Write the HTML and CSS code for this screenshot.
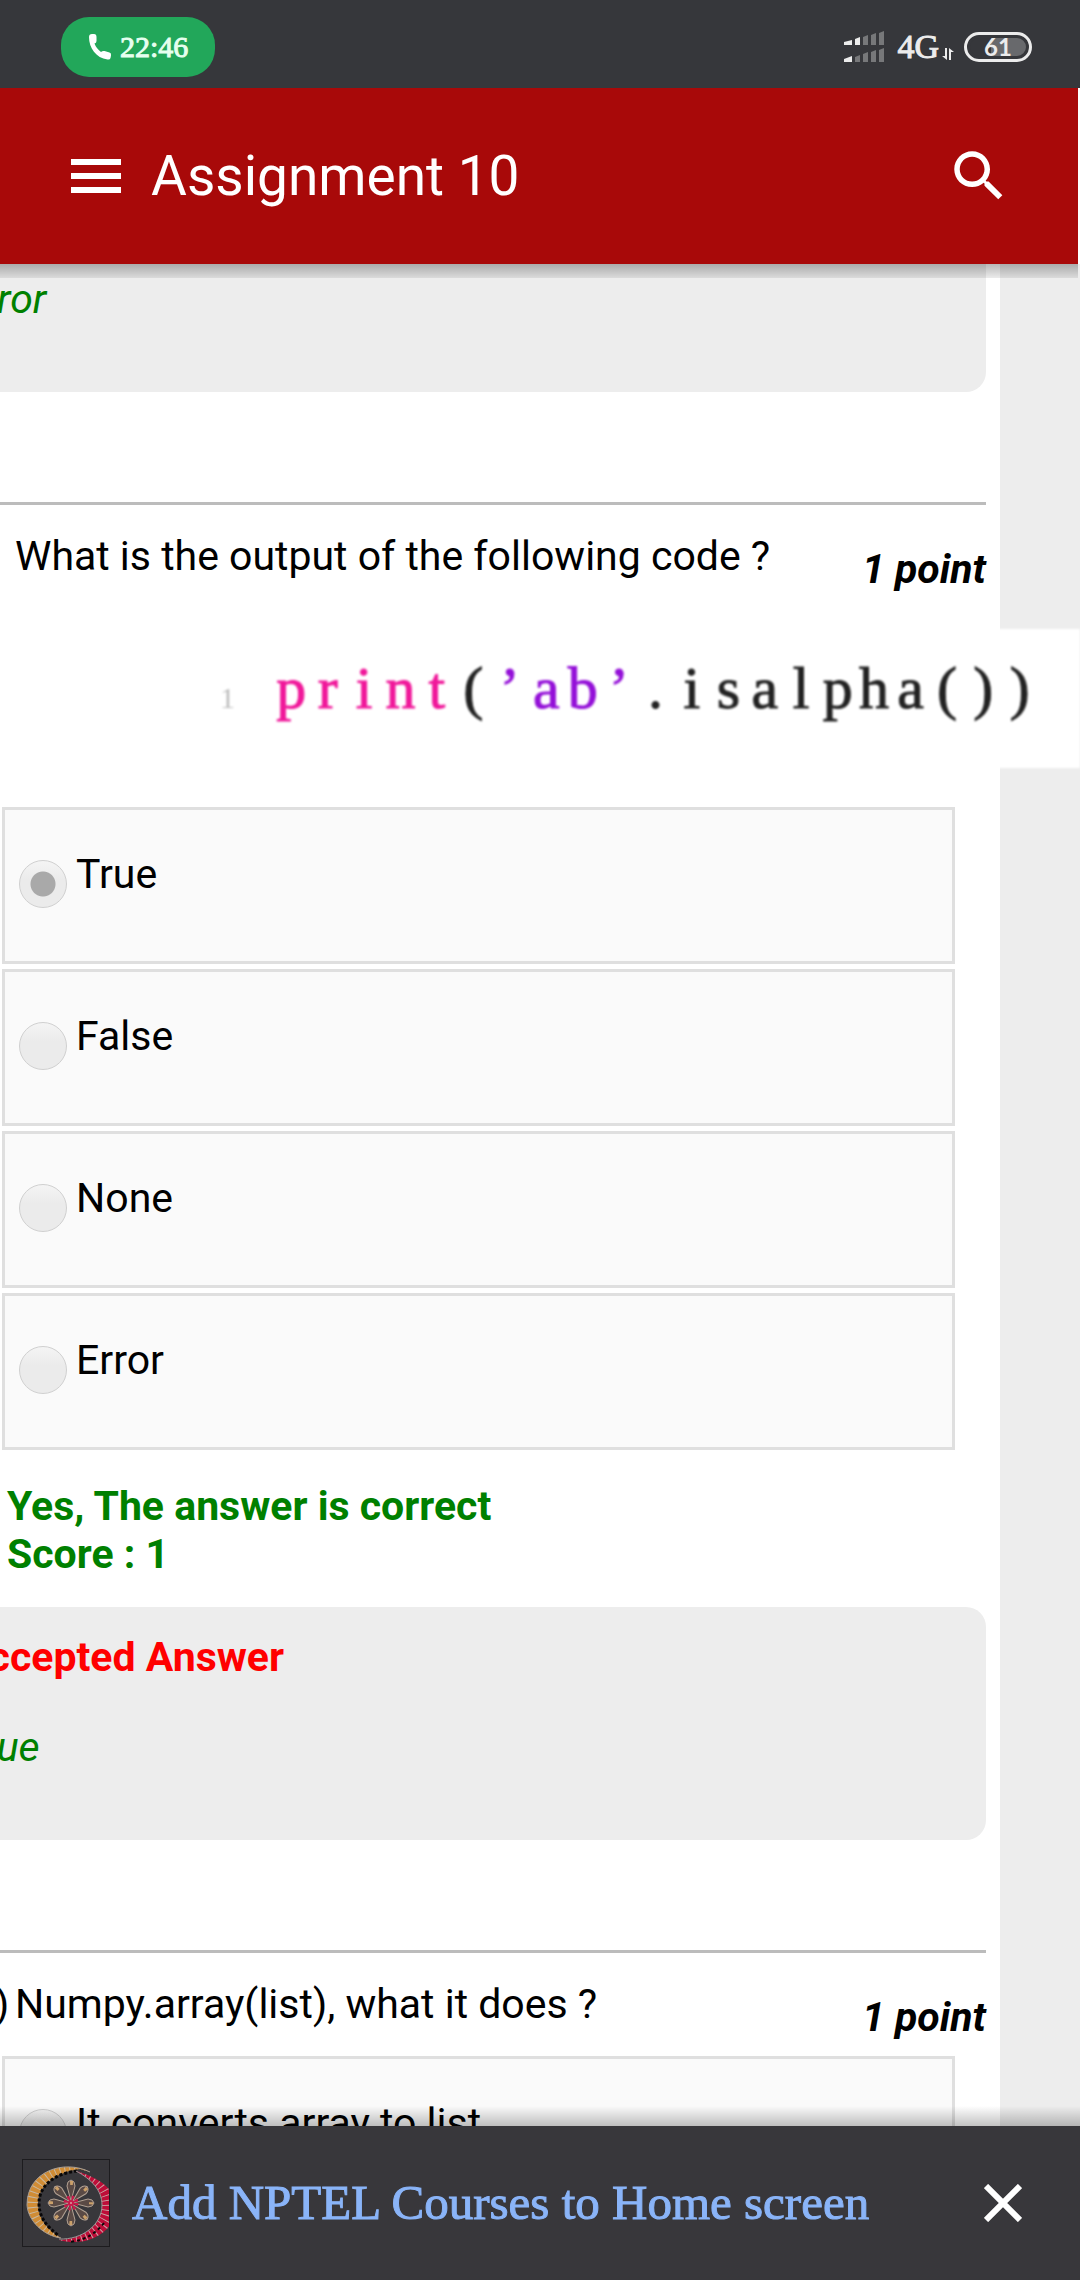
FILE: index.html
```
<!DOCTYPE html>
<html lang="en">
<head>
<meta charset="utf-8">
<meta name="viewport" content="width=device-width, initial-scale=1">
<title>Assignment 10</title>
<link rel="stylesheet" href="styles.css">
</head>
<body>
<div class="screen">
  <div class="status">
    <div class="call">
      <svg class="call-icon" viewBox="0 0 24 28" aria-hidden="true"><path d="M1 4Q1 1 4 1H6Q8.500 1 8.500 4V8Q8.500 10 6.500 10.500Q8 15 13 19Q14.500 17.500 16.500 18L21.500 19.500Q23.500 20 23 22.500L22.500 25Q22 27 19.500 26.500C8 25 1 15 1 4Z"/></svg>
      <span>22:46</span>
    </div>
    <div class="network">
      <svg class="signal" viewBox="0 0 40 32" aria-hidden="true">
        <g class="dim"><path d="M19 6L24 4V14H19ZM27 4L32 2V14H27ZM35 2L40 0V14H35ZM11 26L16 24V31H11ZM19 23L24 21V31H19ZM27 21L32 19V31H27ZM35 19L40 17V31H35Z"/></g>
        <path class="lit" d="M0 11L8 9V14H0ZM11 8L16 6V14H11ZM0 28L8 25V31H0Z"/>
      </svg>
      <span class="carrier">4G</span>
      <svg class="traffic" viewBox="0 0 14 13" aria-hidden="true"><path d="M4 0H6V12L1 8H4ZM8 12V0L13 4H10V12Z"/></svg>
      <span class="battery">61</span>
    </div>
  </div>

  <header class="appbar">
    <button class="icon-button" type="button" aria-label="Menu"><svg class="menu-icon" viewBox="0 0 50 34"><path d="M0 0H50V6H0ZM0 14H50V20H0ZM0 28H50V34H0Z"/></svg></button>
    <h1 class="title">Assignment 10</h1>
    <button class="icon-button" type="button" aria-label="Search"><svg class="search-icon" viewBox="0 0 24 24"><path d="M15.500 14h-.79l-.28-.27C15.410 12.590 16 11.110 16 9.500 16 5.910 13.090 3 9.500 3S3 5.910 3 9.500 5.910 16 9.500 16c1.610 0 3.090-.59 4.230-1.570l.27.28v.79l5 4.990L20.490 19l-4.990-5zm-6 0C7.010 14 5 11.990 5 9.500S7.010 5 9.500 5 14 7.010 14 9.500 11.990 14 9.500 14z"/></svg></button>
  </header>

  <main class="content">
    <div class="sheet">
      <section class="accepted accepted-cut">
        <p class="answer">Error</p>
      </section>

      <section class="question">
        <div class="question-head">
          <span class="number">9)</span>
          <h2 class="prompt">What is the output of the following code ?</h2>
          <em class="points">1 point</em>
        </div>
        <figure class="listing">
          <span class="line-number">1</span>
          <code class="code"><span class="keyword"><b>p</b><b>r</b><b>i</b><b>n</b><b>t</b></span><b>(</b><span class="string"><b>’</b><b>a</b><b>b</b><b>’</b></span><b>.</b><b>i</b><b>s</b><b>a</b><b>l</b><b>p</b><b>h</b><b>a</b><b>(</b><b>)</b><b>)</b></code>
        </figure>
        <div class="options">
          <label class="option"><input type="radio" name="q9" checked disabled><span>True</span></label>
          <label class="option"><input type="radio" name="q9" disabled><span>False</span></label>
          <label class="option"><input type="radio" name="q9" disabled><span>None</span></label>
          <label class="option"><input type="radio" name="q9" disabled><span>Error</span></label>
        </div>
        <p class="feedback">Yes, The answer is correct<br>Score : 1</p>
        <div class="accepted">
          <h3 class="accepted-title">Accepted Answer</h3>
          <p class="answer">True</p>
        </div>
      </section>

      <section class="question">
        <div class="question-head">
          <span class="number">10)</span>
          <h2 class="prompt">Numpy.array(list), what it does ?</h2>
          <em class="points">1 point</em>
        </div>
        <div class="options">
          <label class="option"><input type="radio" name="q10" disabled><span>It converts array to list</span></label>
        </div>
      </section>
    </div>
  </main>

  <footer class="install">
    <svg class="logo" viewBox="0 0 88 88" aria-hidden="true">
      <defs>
        <clipPath id="gold"><path d="M68 13C42 0 5 12 5 46C6 62 22 77 39 79C23 69 16 58 16 44C17 25 35 13 58 10Z"/></clipPath>
        <clipPath id="red"><path d="M54 12C68 16 94 26 94 48C94 72 66 89 37 81C60 81 80 66 80 46C80 31 69 20 54 12Z"/></clipPath>
      </defs>
      <g clip-path="url(#gold)">
        <rect width="88" height="88" fill="#d08c35"/>
        <path d="M68 10C40 3 11 18 11 45C11 62 24 74 39 79" fill="none" stroke="#c9b8a0" stroke-width="18" stroke-dasharray="1 4"/>
      </g>
      <path d="M55 12C34 14 17 26 17 44C17 58 24 67 37 77" fill="none" stroke="#080708" stroke-width="3" stroke-dasharray="3 2"/>
      <path d="M68 13C42 0 5 12 5 46C6 62 22 77 39 79" fill="none" stroke="#a89c90" stroke-width="1"/>
      <g clip-path="url(#red)">
        <rect width="88" height="88" fill="#bd0d38"/>
        <path d="M54 12C74 18 86 30 86 47C86 68 64 83 37 82" fill="none" stroke="#c9a5a5" stroke-width="18" stroke-dasharray="1 4"/>
      </g>
      <path d="M82 64C74 74 64 81 48 83" fill="none" stroke="#080708" stroke-width="2" stroke-dasharray="3 3"/>
      <path d="M54 12C69 20 80 31 80 46C80 66 60 81 37 80" fill="none" stroke="#9d9496" stroke-width="1"/>
      <g fill="#5a4a45" stroke="#b3a294" stroke-width="1">
        <path id="petal" d="M49 42L45 27Q45 22 49 21Q53 22 53 27Z"/>
        <use href="#petal" transform="rotate(45 49 44)"/><use href="#petal" transform="rotate(90 49 44)"/><use href="#petal" transform="rotate(135 49 44)"/><use href="#petal" transform="rotate(180 49 44)"/><use href="#petal" transform="rotate(225 49 44)"/><use href="#petal" transform="rotate(270 49 44)"/><use href="#petal" transform="rotate(315 49 44)"/>
      </g>
      <circle cx="49" cy="44" r="20" fill="none" stroke="#caa06a" stroke-width="4" stroke-dasharray="3 12.700" stroke-dashoffset="1.500"/>
      <circle cx="49" cy="44" r="5" fill="none" stroke="#c9184a" stroke-width="5" stroke-dasharray="2 1.930"/>
      <circle cx="49" cy="44" r="3" fill="#c9184a"/><circle cx="49" cy="44" r="1" fill="#d9a0a0"/>
      <rect x="0.500" y="0.500" width="87" height="87" fill="none" stroke="#1d1c1f"/>
    </svg>
    <a class="install-link" href="#install">Add NPTEL Courses to Home screen</a>
    <button class="icon-button" type="button" aria-label="Dismiss"><svg class="close-icon" viewBox="0 0 38 38"><path d="M2 2L36 36M36 2L2 36"/></svg></button>
  </footer>
</div>
</body>
</html>
```
FILE: styles.css
```
* { box-sizing: border-box; }

body {
  margin: 0;
  font-family: Roboto, "Liberation Sans", sans-serif;
  font-size: 41px;
  line-height: 48px;
  color: #000;
}

h1, h2, h3, p, figure { margin: 0; font-size: inherit; }

.screen {
  display: flex;
  flex-direction: column;
  height: 100vh;
  overflow: hidden;
}

.icon-button {
  display: flex;
  padding: 0;
  border: 0;
  background: none;
}

/* Phone status bar */
.status {
  flex: none;
  display: flex;
  align-items: center;
  justify-content: space-between;
  height: 88px;
  padding: 6px 48px 0 61px;
  background: #36373b;
  color: #ececec;
  font-family: "Liberation Serif", serif;
}

.call {
  display: flex;
  align-items: center;
  gap: 8px;
  height: 60px;
  padding: 0 27px;
  border-radius: 28px;
  background: #22a75a;
  color: #e6ffef;
  font-size: 30px;
  -webkit-text-stroke: 1px;
}

.call-icon { width: 24px; height: 28px; fill: #fff; }

.network { display: flex; align-items: center; }
.signal { width: 40px; height: 32px; margin-right: 13px; }
.dim { fill: #77787a; }
.lit { fill: #ececec; }
.carrier { font-size: 34px; -webkit-text-stroke: 1px; }
.traffic { width: 14px; height: 13px; margin: 14px 9px 0 2px; fill: #ececec; }

.battery {
  display: flex;
  align-items: center;
  justify-content: center;
  width: 68px;
  height: 30px;
  border: 3px solid #ececec;
  border-radius: 15px;
  background: linear-gradient(90deg, #36373b 24px, #68696c 24px) padding-box;
  box-shadow: inset 0 0 0 3px #36373b;
  font: bold 24px/24px Lato, sans-serif;
}

/* Application bar */
.appbar {
  flex: none;
  position: relative;
  z-index: 1;
  display: flex;
  align-items: center;
  gap: 30px;
  height: 176px;
  margin-right: 2px;
  padding: 0 66px 0 71px;
  background: #a80909;
  color: #fff;
}

.appbar::after {
  content: "";
  position: absolute;
  top: 100%;
  left: 0;
  right: 0;
  height: 14px;
  background: linear-gradient(rgba(0, 0, 0, 0.28), rgba(0, 0, 0, 0.08));
}

.title { flex: 1; font-size: 55px; line-height: 64px; font-weight: 400; }
.menu-icon { width: 50px; height: 34px; fill: #fff; }
.search-icon { width: 66px; height: 66px; fill: #fff; }

/* Assignment sheet, panned sideways under the screen edge */
.content {
  flex: 1;
  min-height: 0;
  overflow: hidden;
  background: #ededed;
}

.sheet {
  min-height: 100%;
  margin: 0 80px 0 -51px;
  padding-right: 14px;
  background: #fff;
}

.accepted {
  padding: 26px 12px 69px;
  border-radius: 20px;
  background: #ededed;
}

.accepted-cut { padding-top: 11px; border-radius: 0 0 20px 20px; }
.accepted-title { margin-bottom: 42px; color: #f00; font-weight: 700; }
.answer { color: #008000; font-style: italic; }

.question { margin-top: 110px; border-top: 3px solid #bcbcbc; }
.question-head { display: flex; align-items: flex-start; padding-top: 27px; }
.number { width: 66px; }
.prompt { flex: 1; font-weight: 400; }
.points { margin-top: 13px; font-weight: 700; }

.listing {
  display: flex;
  align-items: baseline;
  height: 139px;
  margin: 36px -94px 39px 53px;
  padding: 23px 42px 0 218px;
  background: #fff;
  font-family: "Liberation Serif", serif;
  filter: blur(1px);
}

.line-number { width: 53px; color: #bbb; font-size: 30px; }

/* Fixed-column code: every character sits in a cell of the same width */
.code {
  flex: 1;
  display: grid;
  grid-auto-flow: column;
  grid-auto-columns: minmax(0, 1fr);
  color: #222;
  font-family: inherit;
  font-size: 60px;
  line-height: 72px;
}

.code span { display: contents; }
.code b { font-weight: 400; text-align: center; -webkit-text-stroke: 1px; }
.keyword { color: #f0189a; }
.string { color: #9410d8; }

.options { display: grid; gap: 5px; margin: 15px 31px 0 53px; }
.listing + .options { margin-top: 0; }

.option {
  display: flex;
  align-items: flex-start;
  gap: 9px;
  padding: 40px 14px 53px;
  border: 3px solid #dfdfdf;
  background: #fafafa;
}

.option input {
  appearance: none;
  flex: none;
  width: 48px;
  height: 48px;
  margin: 10px 0 0;
  border: 1px solid #d0d0d0;
  border-radius: 50%;
  background: linear-gradient(#f4f4f4, #ebebeb 40%, #ebebeb);
}

.option input:checked {
  background: radial-gradient(circle, #a9a9a9 12px, transparent 13px), linear-gradient(#f4f4f4, #ebebeb 40%, #ebebeb);
}

.feedback { margin: 32px 0 29px 58px; color: #008000; font-weight: 700; }

/* Install prompt */
.install {
  flex: none;
  position: relative;
  display: flex;
  align-items: center;
  gap: 22px;
  height: 154px;
  padding: 0 58px 0 22px;
  background: #38373b;
}

.install::before {
  content: "";
  position: absolute;
  bottom: 100%;
  left: 0;
  right: 0;
  height: 20px;
  background: linear-gradient(transparent, rgba(0, 0, 0, 0.24));
}

.logo { flex: none; width: 88px; height: 88px; }

.install-link {
  flex: 1;
  color: #8ab4f8;
  font: 49px/56px "Liberation Serif", serif;
  text-decoration: none;
  -webkit-text-stroke: 1px;
}

.close-icon { width: 38px; height: 38px; fill: none; stroke: #fff; stroke-width: 6; }
```
